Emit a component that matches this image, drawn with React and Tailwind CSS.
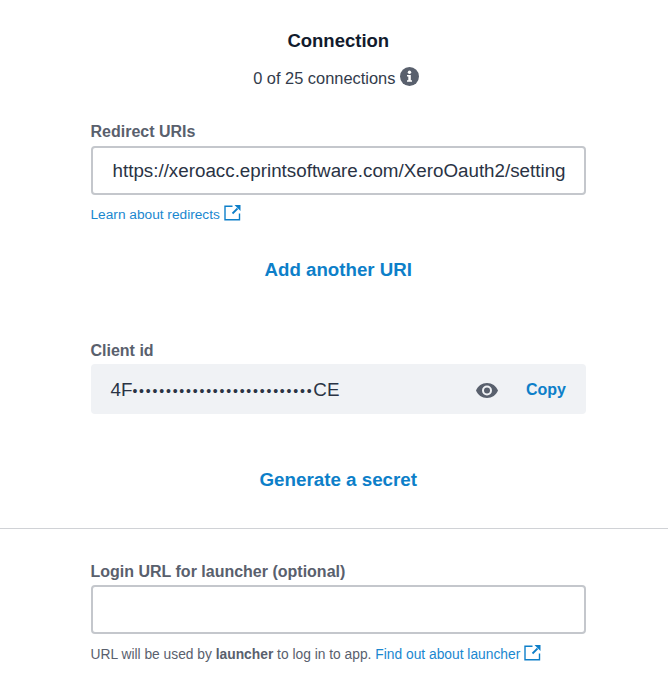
const ExternalIcon = () => (
  <svg width="17" height="17" viewBox="0 0 17 17" fill="none" className="ml-[4px] mb-[6px] shrink-0 text-[#0d7fc9]">
    <path d="M8.5 2.2H1V15.7H15.5V9.5" stroke="currentColor" strokeWidth="1.4" />
    <path d="M8.5 9.5L13.5 4.5" stroke="currentColor" strokeWidth="1.8" />
    <path d="M10.5 1H16.5V7Z" fill="currentColor" />
  </svg>
);

const InfoIcon = () => (
  <svg width="19" height="19" viewBox="0 0 19 19" className="ml-[5px] mb-[4px]">
    <circle cx="9.5" cy="9.5" r="9.5" fill="#59606d" />
    <circle cx="9.5" cy="5.2" r="1.7" fill="#fff" />
    <path d="M7 8h3.8v5.2H12v1.6H7v-1.6h1.3V9.6H7z" fill="#fff" />
  </svg>
);

const EyeIcon = () => (
  <svg width="24" height="24" viewBox="0 0 24 24" fill="#59606d">
    <path d="M12 5C7 5 2.7 8.1 1 12.5 2.7 16.9 7 20 12 20s9.3-3.1 11-7.5C21.3 8.1 17 5 12 5zm0 12.5a5 5 0 1 1 0-10 5 5 0 0 1 0 10zm0-8a3 3 0 1 0 0 6 3 3 0 0 0 0-6z" />
  </svg>
);

const Label = ({ children }) => (
  <div className="text-[16px] leading-[20px] font-bold text-[#59606d]">{children}</div>
);

export default function App() {
  return (
    <div className="w-[668px] h-[699px] bg-white overflow-hidden font-['Liberation_Sans',Arial,sans-serif] text-[#1f2a3c]">
      <div className="pl-[90.5px] pr-[82px] pt-[30px] w-[668px]">
        <div className="text-center text-[18.5px] leading-[22px] font-bold text-[#121b2d]">Connection</div>
        <div className="flex justify-center items-center mt-[14px] pr-[4px] h-[24px] text-[16.4px] text-[#323b4b]">
          0 of 25 connections
          <InfoIcon />
        </div>

        <div className="mt-[32px]">
          <Label>Redirect URIs</Label>
        </div>
        <div className="mt-[4px] h-[49px] border-2 border-[#c4c7cc] rounded-[4px] pl-[20px] pr-[18px] pt-[1px] flex items-center overflow-hidden text-[18.8px] whitespace-nowrap text-[#2a3344]">
          <span className="overflow-hidden">https://xeroacc.eprintsoftware.com/XeroOauth2/settings</span>
        </div>
        <div className="flex items-center mt-[10px] h-[20px] text-[13.7px] text-[#1a87cf]">
          Learn about redirects
          <ExternalIcon />
        </div>

        <div className="mt-[34px] text-center text-[18.7px] leading-[22px] font-bold text-[#0d7fc9]">Add another URI</div>

        <div className="mt-[60px]">
          <Label>Client id</Label>
        </div>
        <div className="mt-[3px] h-[50px] bg-[#f0f2f5] rounded-[4px] pl-[20px] pr-[20px] pt-[2px] flex items-center justify-between">
          <span className="text-[18.8px] text-[#2a3344] whitespace-nowrap">4F<span className="tracking-[1.8px] text-[14px]">•••••••••••••••••••••••••••</span>CE</span>
          <span className="flex items-center gap-[27px]">
            <EyeIcon />
            <span className="text-[16px] font-bold text-[#0d7fc9]">Copy</span>
          </span>
        </div>

        <div className="mt-[55px] text-center text-[18.8px] leading-[22px] font-bold text-[#0d7fc9]">Generate a secret</div>
      </div>

      <div className="mt-[37px] border-t border-[#d0d2d6]" />

      <div className="pl-[90.5px] pr-[82px] pt-[33px] w-[668px]">
        <Label>Login URL for launcher (optional)</Label>
        <div className="mt-[3px] h-[49px] border-2 border-[#c4c7cc] rounded-[4px]" />
        <div className="flex items-center mt-[11px] h-[20px] text-[13.8px] whitespace-nowrap text-[#59606d]">
          URL will be used by&nbsp;<b>launcher</b>&nbsp;to log in to app.&nbsp;
          <span className="text-[#1a87cf]">Find out about launcher</span>
          <ExternalIcon />
        </div>
      </div>
    </div>
  );
}
